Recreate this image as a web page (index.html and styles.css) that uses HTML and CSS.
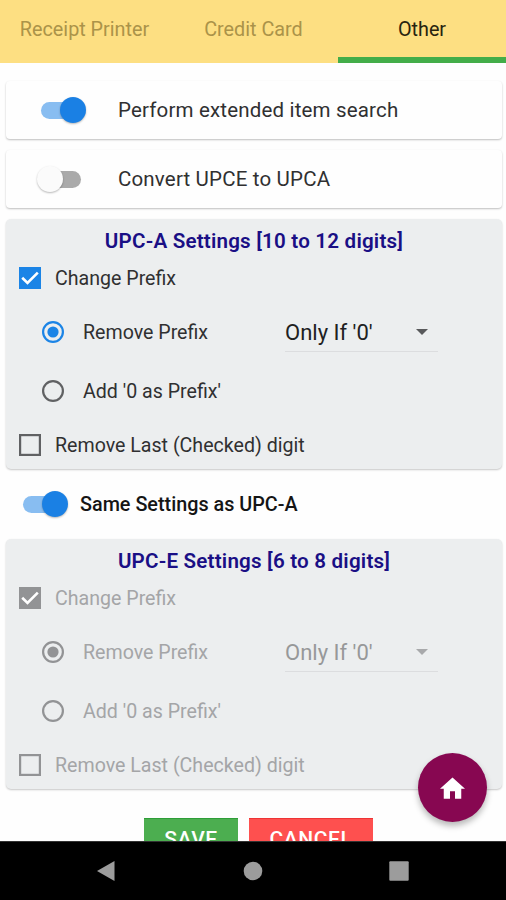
FILE: index.html
```html
<!DOCTYPE html>
<html lang="en">
<head>
<meta charset="utf-8">
<title>Settings</title>
<link rel="stylesheet" href="styles.css">
</head>
<body>
<div class="screen">
  <nav class="tabs">
    <div class="tab"><span>Receipt Printer</span></div>
    <div class="tab"><span>Credit Card</span></div>
    <div class="tab active"><span>Other</span></div>
  </nav>
  <main class="content">
    <section class="card">
      <span class="switch on"></span><span>Perform extended item search</span>
    </section>
    <section class="card">
      <span class="switch"></span><span>Convert UPCE to UPCA</span>
    </section>
    <section class="panel">
      <h2>UPC-A Settings [10 to 12 digits]</h2>
      <div class="row check">
        <svg class="icon" viewBox="0 0 22 22"><rect class="fill" width="22" height="22"/><path class="tick" d="M3.2 10.8 8.5 16 18.8 5.6"/></svg>
        <span>Change Prefix</span>
      </div>
      <div class="row radio first">
        <svg class="icon" viewBox="0 0 22 22"><circle class="ring" cx="11" cy="11" r="9.9"/><circle class="fill" cx="11" cy="11" r="5.6"/></svg>
        <span>Remove Prefix</span>
        <div class="select"><span>Only If '0'</span><i class="caret"></i></div>
      </div>
      <div class="row radio">
        <svg class="icon" viewBox="0 0 22 22"><circle class="empty" cx="11" cy="11" r="9.9"/></svg>
        <span>Add '0 as Prefix'</span>
      </div>
      <div class="row check last">
        <svg class="icon" viewBox="0 0 22 22"><rect class="empty" x="1.1" y="1.1" width="19.8" height="19.8"/></svg>
        <span>Remove Last (Checked) digit</span>
      </div>
    </section>
    <div class="same"><span class="switch on"></span><span>Same Settings as UPC-A</span></div>
    <section class="panel disabled">
      <h2>UPC-E Settings [6 to 8 digits]</h2>
      <div class="row check">
        <svg class="icon" viewBox="0 0 22 22"><rect class="fill" width="22" height="22"/><path class="tick" d="M3.2 10.8 8.5 16 18.8 5.6"/></svg>
        <span>Change Prefix</span>
      </div>
      <div class="row radio first">
        <svg class="icon" viewBox="0 0 22 22"><circle class="ring" cx="11" cy="11" r="9.9"/><circle class="fill" cx="11" cy="11" r="5.6"/></svg>
        <span>Remove Prefix</span>
        <div class="select"><span>Only If '0'</span><i class="caret"></i></div>
      </div>
      <div class="row radio">
        <svg class="icon" viewBox="0 0 22 22"><circle class="empty" cx="11" cy="11" r="9.9"/></svg>
        <span>Add '0 as Prefix'</span>
      </div>
      <div class="row check last">
        <svg class="icon" viewBox="0 0 22 22"><rect class="empty" x="1.1" y="1.1" width="19.8" height="19.8"/></svg>
        <span>Remove Last (Checked) digit</span>
      </div>
    </section>
    <div class="actions">
      <button class="btn save">SAVE</button>
      <button class="btn cancel">CANCEL</button>
    </div>
  </main>
  <footer class="navbar">
    <svg viewBox="0 0 20 22"><path d="M1 11 18.5 1v20z"/></svg>
    <svg viewBox="0 0 20 22"><circle cx="10" cy="11" r="9.3"/></svg>
    <svg viewBox="0 0 20 22"><rect x=".3" y="1.3" width="19.4" height="19.4" rx="1"/></svg>
  </footer>
  <button class="fab" aria-label="Home">
    <svg viewBox="2 3 20 17"><path d="M10 20v-6h4v6h5v-8h3L12 3 2 12h3v8z"/></svg>
  </button>
</div>
</body>
</html>
```
FILE: styles.css
```css
* { box-sizing: border-box; }
body { margin: 0; background: #fefefe; color: #303031; font-family: Roboto, "Liberation Sans", sans-serif; }
.screen { position: relative; width: 506px; height: 900px; display: flex; flex-direction: column; overflow: hidden; }
span, h2, button { white-space: nowrap; }

.tabs { display: grid; grid-template-columns: 169px 168px 168px; column-gap: .5px; height: 63px; flex: none; background: #fddf82; }
.tab { display: flex; align-items: center; justify-content: center; padding-bottom: 5px; font-size: 19.8px; color: #ab9349; }
.tab.active { color: #28240f; border-bottom: 6px solid #43ad49; padding: 2px 0 0; }

.content { flex: 1; min-height: 0; overflow: hidden; padding: 18px 4px 0 6px; }
.card { display: flex; align-items: center; height: 58px; margin-bottom: 11px; padding-left: 35px; background: #fefefe; border-radius: 4px; box-shadow: 0 1px 2px rgba(0,0,0,.25); font-size: 20.5px; letter-spacing: .17px; }
.card .switch { margin-right: 32px; }

.switch { position: relative; flex: none; width: 45px; height: 26px; display: flex; align-items: center; }
.switch::before { content: ""; width: 40px; height: 17px; border-radius: 9px; background: #aaa; }
.switch::after { content: ""; position: absolute; left: -4px; top: 0; width: 26px; height: 26px; border-radius: 50%; background: #fbfbfb; box-shadow: 0 1px 2px rgba(0,0,0,.28); }
.switch.on::before { background: #88bdf1; }
.switch.on::after { left: 19px; background: #1a80e4; }

.panel { display: flex; flex-direction: column; height: 250px; background: #eceeef; border-radius: 5px; box-shadow: 0 1px 2px rgba(0,0,0,.22); font-size: 19.6px; }
.panel h2 { margin: 0; height: 42px; line-height: 44px; text-align: center; color: #1a0f85; font-size: 20.6px; font-weight: 600; letter-spacing: .2px; }
.row { display: flex; align-items: center; height: 33px; flex: none; }
.check { padding-left: 13px; }
.check .icon { margin-right: 14px; }
.radio { height: 59px; padding-left: 36px; }
.radio .icon { margin-right: 19px; }
.radio.first { margin-top: 8px; }
.row > span { padding-top: 1px; }
.row.last { height: 50px; }
.row.last > span { padding-top: 0; }
.icon { width: 22px; height: 22px; flex: none; }
.fill { fill: #1b84e6; }
.tick { fill: none; stroke: #fff; stroke-width: 2.6; }
.ring { fill: none; stroke: #1b84e6; stroke-width: 2.2; }
.empty { fill: none; stroke: #606163; stroke-width: 2.2; }
.first > span { width: 202px; }
.select { display: flex; align-items: center; justify-content: space-between; width: 153px; height: 40px; padding: 3px 10px 0 0; border-bottom: 1px solid #dcdddf; font-size: 22px; color: #202021; }
.caret { margin-top: -2px; border: 6px solid transparent; border-top-color: #58595b; border-bottom: 0; }

.disabled { color: #a4a5a7; }
.disabled .fill { fill: #929395; }
.disabled .ring, .disabled .empty { stroke: #929395; }
.disabled .select { color: #979899; }
.disabled .caret { border-top-color: #a8a9ab; }

.same { display: flex; align-items: center; height: 70px; padding-left: 17px; font-size: 19.8px; font-weight: 500; color: #151515; }
.same .switch { margin-right: 12px; }

.actions { display: flex; gap: 11px; padding-left: 138px; margin-top: 29px; }
.btn { border: 0; padding: 0; height: 44px; font: 500 21px/40px Roboto, sans-serif; letter-spacing: .6px; color: #fff; display: flex; justify-content: center; }
.save { width: 94px; background: #4cae50; border-top: 1px solid #2e9e38; }
.cancel { width: 124px; background: #fe504f; border-top: 1px solid #ee3435; }

.navbar { flex: none; height: 59px; display: flex; align-items: center; justify-content: space-between; padding: 0 97px 0 96px; background: #000; border-top: 1px solid #333; }
.navbar svg { width: 20px; height: 22px; fill: #9c9c9c; }

.fab { position: absolute; left: 418px; top: 753px; width: 69px; height: 69px; border: 0; border-radius: 50%; background: #870751; box-shadow: 0 4px 6px rgba(0,0,0,.28); display: flex; align-items: center; justify-content: center; padding: 0; }
.fab svg { width: 25px; height: 22px; fill: #fff; }
```
